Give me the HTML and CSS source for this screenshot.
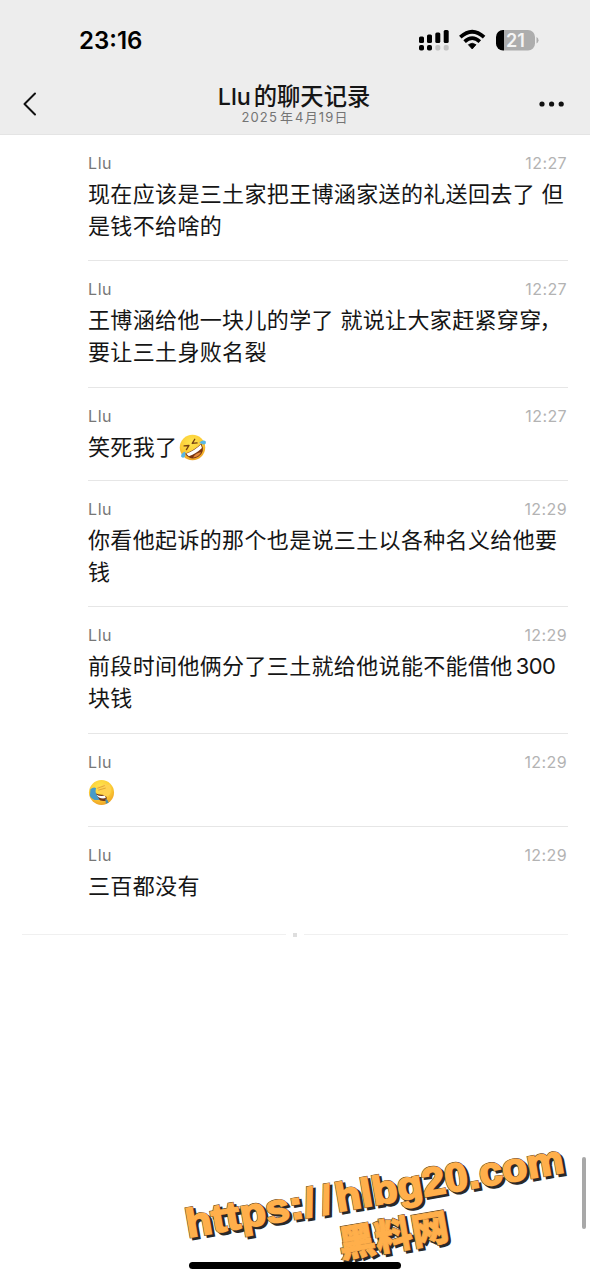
FILE: index.html
```html
<!DOCTYPE html>
<html lang="zh-CN">
<head>
<meta charset="utf-8">
<title>Llu的聊天记录</title>
<link rel="stylesheet" href="styles.css">
</head>
<body>
<div class="screen">
  <header class="header">
    <div class="status">
      <span class="clock">23:16</span>
      <svg class="status-icons" width="122" height="24" viewBox="0 0 122 24">
        <g fill="#000">
          <rect x="1" y="8.500" width="5" height="6.500" rx="1.500"/><rect x="9" y="6.500" width="5" height="8.500" rx="1.500"/><rect x="17.300" y="4.500" width="5" height="10.500" rx="1.500"/><rect x="25.700" y="2" width="5" height="13" rx="1.500"/>
          <rect x="1" y="17" width="5" height="5.500" rx="1.800"/><rect x="9" y="17" width="5" height="5.500" rx="1.800"/>
        </g>
        <g fill="#c2c2c2"><rect x="17.300" y="17" width="5" height="5.500" rx="1.800"/><rect x="25.700" y="17" width="5" height="5.500" rx="1.800"/></g>
        <g fill="none" stroke="#000" stroke-width="3.700"><path d="M42.300 9.200Q54.200-1.700 66.100 9.200"/><path d="M46.600 13.600Q54.200 6.700 61.800 13.600"/></g>
        <path d="M50.400 16.700Q54.200 13.700 58 16.700L54.200 21Z" fill="#000" stroke="#000" stroke-width=".8" stroke-linejoin="round"/>
        <path d="M86 2h24a7 7 0 0 1 7 7v6.500a7 7 0 0 1-7 7H86z" fill="#adadad"/>
        <path d="M86 2v20.500h-1a7 7 0 0 1-7-7V9a7 7 0 0 1 7-7z" fill="#000"/>
        <path d="M118.500 9q2 1 2 3.200t-2 3.200z" fill="#adadad"/>
        <text class="battery-level" x="97.500" y="18.700" text-anchor="middle">21</text>
      </svg>
    </div>
    <div class="nav">
      <svg class="back" width="16" height="26" viewBox="0 0 16 26"><path d="M14 2.500 3.500 13 14 23.500" fill="none" stroke="#111" stroke-width="2" stroke-linecap="round" stroke-linejoin="round"/></svg>
      <div class="heading">
        <h1 class="title"><span class="title-latin">Llu</span>的聊天记录</h1>
        <div class="date">2025<span class="gap">年</span>4<span class="gap-small">月</span>19日</div>
      </div>
      <svg class="more" width="28" height="8" viewBox="0 0 28 8"><circle cx="4" cy="4" r="2.600"/><circle cx="13.600" cy="4" r="2.600"/><circle cx="23.200" cy="4" r="2.600"/></svg>
    </div>
  </header>

  <main class="records">
    <article class="record"><div class="meta"><span class="name">Llu</span><time class="time">12:27</time></div><p class="text">现在应该是三土家把王博涵家送的礼送回去了 但<br>是钱不给啥的</p></article>
    <article class="record"><div class="meta"><span class="name">Llu</span><time class="time">12:27</time></div><p class="text">王博涵给他一块儿的学了 就说让大家赶紧穿穿<span class="comma">，</span><br>要让三土身败名裂</p></article>
    <article class="record short"><div class="meta"><span class="name">Llu</span><time class="time">12:27</time></div><p class="text">笑死我了<svg class="emoji emoji-inline" width="28" height="28" viewBox="0 0 28 28">
      <defs><radialGradient id="face" cx=".45" cy=".3" r=".75"><stop offset="0" stop-color="#ffe650"/><stop offset=".6" stop-color="#fbcb35"/><stop offset="1" stop-color="#ed9a22"/></radialGradient></defs>
      <circle cx="14" cy="14" r="13.200" fill="url(#face)"/>
      <g transform="rotate(-32 14 14)"><path d="M4 15.300q10 2.200 20 0Q23 25.300 14 25.300T4 15.300z" fill="#7a3510"/><path d="M5 16q9 2 18 0l-1 3.700q-8 1.800-16 0z" fill="#fff"/><path d="M9 23q5-2.500 10 0-5 3.200-10 0z" fill="#e58a3e"/><path d="m7.500 8 4.500 2.300-4.500 2.200M20.500 8 16 10.300l4.500 2.200" fill="none" stroke="#754013" stroke-width="1.400" stroke-linecap="round" stroke-linejoin="round"/><path d="M5.500 13.500q-5-1-6.500 2.300 1 3.600 4 1.500zM22.500 13.500q5-1 6.500 2.300-1 3.600-4 1.500z" fill="#57b6e5"/></g>
    </svg></p></article>
    <article class="record"><div class="meta"><span class="name">Llu</span><time class="time">12:29</time></div><p class="text">你看他起诉的那个也是说三土以各种名义给他要<br>钱</p></article>
    <article class="record"><div class="meta"><span class="name">Llu</span><time class="time">12:29</time></div><p class="text">前段时间他俩分了三土就给他说能不能借他<span class="number">300</span><br>块钱</p></article>
    <article class="record short"><div class="meta"><span class="name">Llu</span><time class="time">12:29</time></div><p class="text emoji-text"><svg class="emoji" width="28" height="28" viewBox="0 0 28 28">
      <circle cx="14" cy="14" r="13" fill="url(#face)"/>
      <path d="M7 14.500q5 2.500 10 1.500 4 2.500 1.500 6.500Q10 24.500 7 14.500z" fill="#71381a"/><path d="M8 16q5 2.500 9.500 1.200l1 2.600Q12 21.500 8 16z" fill="#fff"/>
      <path d="M2.500 10.500q3.500-3 6-1-1.500 3 .5 7l3 5Q5 23 2 17.500z" fill="#469bc9"/>
      <path d="M18 20.500q3 1 3.500 4l-3 1.200z" fill="#468dae"/>
      <path d="M9.500 11Q8.500 6 13 7.500l4-2.200q2-.7 2 1l3.500-.8q2 4.500.8 9-2.500 5.500-6.800 2.500-4-3.500-7-6z" fill="#ffd251"/>
      <path d="m10 9.500 7-2.500M11 11.500l7-2" fill="none" stroke="#d99a2e" stroke-width=".8" stroke-linecap="round"/>
    </svg></p></article>
    <article class="record short last"><div class="meta"><span class="name">Llu</span><time class="time">12:29</time></div><p class="text">三百都没有</p></article>
    <div class="end"><span class="end-line"></span><span class="end-dot"></span><span class="end-line"></span></div>
  </main>

  <div class="scrollbar"></div>
  <svg class="watermark" width="590" height="200" viewBox="0 1080 590 200">
    <g transform="translate(188 1237.500) rotate(-9.800)">
      <g class="url mark-shadow" transform="translate(2.200 2.500)"><text textLength="119" lengthAdjust="spacingAndGlyphs">https:</text><text x="120">/</text><text x="137">/</text><text x="152" textLength="231" lengthAdjust="spacingAndGlyphs">hlbg20.com</text></g>
      <g class="url mark-edge"><text textLength="119" lengthAdjust="spacingAndGlyphs">https:</text><text x="120">/</text><text x="137">/</text><text x="152" textLength="231" lengthAdjust="spacingAndGlyphs">hlbg20.com</text></g>
      <g class="url mark-face"><text textLength="119" lengthAdjust="spacingAndGlyphs">https:</text><text x="120">/</text><text x="137">/</text><text x="152" textLength="231" lengthAdjust="spacingAndGlyphs">hlbg20.com</text></g>
    </g>
    <g transform="translate(341 1258) rotate(-9.800)">
      <text class="site mark-shadow" x="2" y="2.500">黑料网</text>
      <text class="site mark-edge">黑料网</text>
      <text class="site mark-face">黑料网</text>
    </g>
  </svg>
  <div class="home-bar"></div>
</div>
</body>
</html>
```
FILE: styles.css
```css
* { box-sizing: border-box; }
body { margin: 0; background: #fff; }
.screen { position: relative; width: 590px; height: 1280px; overflow: hidden; background: #fff; font-family: Inter, "Noto Sans CJK SC", sans-serif; color: #151515; }
.header { height: 135px; background: #ededed; border-bottom: 1px solid #e4e4e4; }
.status { height: 80px; display: flex; justify-content: space-between; align-items: center; padding: 0 50px 0 79px; }
.clock { font-size: 24px; font-weight: 600; color: #000; margin-top: 1px; }
.status-icons { display: block; }
.battery-level { font: 600 18px Inter, sans-serif; fill: #f4f4f4; }
.nav { height: 54px; padding: 0 24px 0 21px; display: flex; justify-content: space-between; align-items: flex-start; }
.back { margin-top: 11px; }
.heading { text-align: center; width: 180px; margin-left: 13px; }
.title { margin: 3px 0 0; font-size: 23.3px; line-height: 27px; font-weight: 500; white-space: nowrap; }
.title-latin { margin-right: 3px; }
.date { font-size: 13px; line-height: 14px; letter-spacing: 1.150px; color: #747474; white-space: nowrap; padding-left: 2px; }
.gap { margin: 0 1px 0 2px; }
.gap-small { margin: 0; }
.more { margin-top: 20px; fill: #111; }
.records { padding: 0 22px; }
.record { margin-left: 66px; padding: 19px 0 18.300px; border-bottom: 1px solid #e6e6e6; }
.meta { height: 24px; line-height: 19px; display: flex; justify-content: space-between; }
.name { font-size: 16px; letter-spacing: .6px; color: #777; }
.time { font-size: 16px; letter-spacing: .4px; color: #b3b3b3; padding-right: 1px; }
.text { margin: 0; font-size: 22px; line-height: 32px; letter-spacing: .35px; white-space: nowrap; }
.short .text { height: 31.300px; }
.last { padding-bottom: 31.300px; border-bottom: 0; }
.number { margin-left: 3px; letter-spacing: -.5px; }
.comma { margin-left: -2px; }
.emoji { display: block; width: 27px; height: 27px; overflow: visible; }
.emoji-text { padding-top: 2px; }
.emoji-inline { display: inline-block; margin: 0 0 0 2px; vertical-align: -6px; }
.end { display: flex; align-items: center; height: 4px; }
.end-line { flex: 1; height: 1px; background: #f0f0f0; }
.end-dot { width: 4px; height: 4px; margin: 0 7px; background: #dedede; }
.scrollbar { position: absolute; left: 582px; top: 1157px; width: 4px; height: 72px; border-radius: 2px; background: #a8a8a8; }
.watermark { position: absolute; left: 0; top: 1080px; overflow: visible; }
.url { font: bold 40px "Liberation Sans", sans-serif; }
.site { font: 900 37px "Noto Sans CJK SC", sans-serif; }
.mark-face { fill: #ffaf4b; stroke: #ffaf4b; stroke-width: .9px; }
.mark-edge { fill: #51391e; stroke: #51391e; stroke-width: 2px; }
.mark-shadow { fill: #292929; stroke: #292929; stroke-width: 2px; }
.url.mark-face { stroke-width: 1.700px; }
.url.mark-edge { stroke-width: 2.500px; }
.url.mark-shadow { stroke-width: 2.500px; }
.home-bar { position: absolute; left: 189px; top: 1262px; width: 212px; height: 7px; border-radius: 4px; background: #000; }
```
